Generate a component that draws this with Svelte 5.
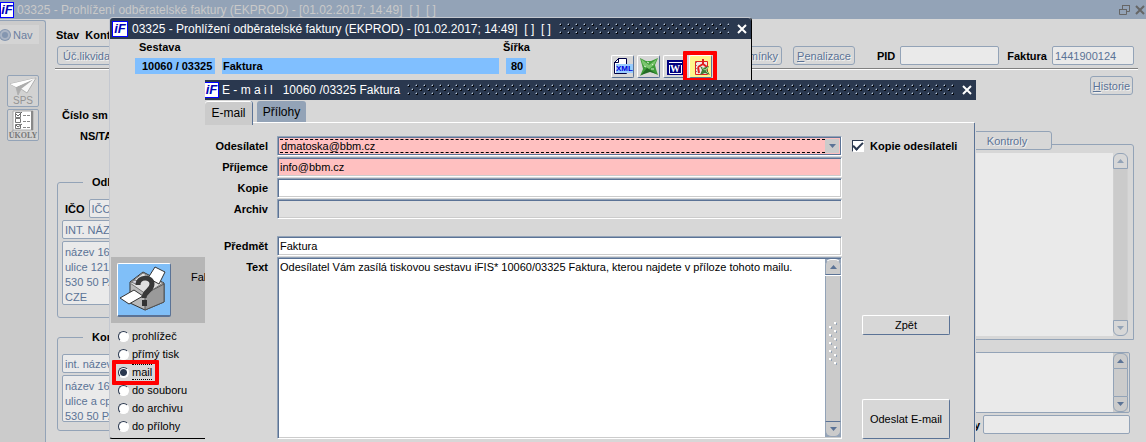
<script>
  let target = $state('mail');
  let copySender = $state(true);
  const targets = ['prohlížeč', 'přímý tisk', 'mail', 'do souboru', 'do archivu', 'do přílohy'];
  const title = '03325 - Prohlížení odběratelské faktury (EKPROD) - [01.02.2017; 14:49]  [ ]  [ ]';
</script>

{#snippet logo()}
  <span class="logo">iF</span>
{/snippet}

{#snippet dots(id)}
  <svg class="dots" aria-hidden="true">
    <defs>
      <pattern {id} width="8" height="8" patternUnits="userSpaceOnUse">
        <path d="M1 1h1v1h-1zM5 5h1v1h-1z" fill="#b4c2d4" />
        <path d="M0 1h1v1h-1zM1 0h1v1h-1zM4 5h1v1h-1zM5 4h1v1h-1z" fill="#64748a" />
        <path d="M2 1h1v2h-2v-1h1zM6 5h1v2h-2v-1h1z" fill="#05080e" />
      </pattern>
    </defs>
    <rect width="100%" height="100%" fill="url(#{id})" />
  </svg>
{/snippet}

{#snippet cross()}
  <svg width="10" height="10" viewBox="0 0 10 10" aria-hidden="true">
    <path d="M1 1L9 9M9 1L1 9" stroke="currentColor" stroke-width="2" />
  </svg>
{/snippet}

{#snippet scrollbar(kind)}
  <div class="scroll {kind}" aria-hidden="true">
    <span class="up"><svg width="7" height="4" viewBox="0 0 7 4"><path d="M0 4L3.500 0L7 4z" fill="currentColor" /></svg></span>
    <span class="track">
      {#if kind === 'active'}
        <svg width="10" height="44" viewBox="0 0 10 44">
          {#each [0, 1, 2, 3, 4, 5] as i}
            <rect x="6" y={i * 8} width="2" height="2" fill="#fff" />
            <rect x="8" y={i * 8 + 1} width="1" height="2" fill="#93a3b7" />
            {#if i < 5}
              <rect x="1" y={i * 8 + 4} width="2" height="2" fill="#fff" />
              <rect x="3" y={i * 8 + 5} width="1" height="2" fill="#93a3b7" />
            {/if}
          {/each}
        </svg>
      {/if}
    </span>
    <span class="down"><svg width="7" height="4" viewBox="0 0 7 4"><path d="M0 0L3.500 4L7 0z" fill="currentColor" /></svg></span>
  </div>
{/snippet}

<div class="desktop">
  <main class="app">
    <header class="bar inactive">
      {@render logo()}
      <h1>{title}</h1>
      <div class="controls">
        <button aria-label="Obnovit">
          <svg width="11" height="11" viewBox="0 0 11 11"><path d="M3.500 5V1.500H10.500V7.500H7M.5 5.500H7.500V10.500H.5z" fill="none" stroke="currentColor" /><path d="M3 1h8v1H3zM0 5h8v1H0z" fill="currentColor" /></svg>
        </button>
        <button aria-label="Zavřít">{@render cross()}</button>
      </div>
    </header>

    <div class="workspace">
      <nav class="side">
        <label class="nav"><input type="radio" name="nav" disabled />Nav</label>
        <button class="tool" aria-label="SPS">
          <svg width="28" height="20" viewBox="0 0 28 20"><path d="M1 8L27 2L18 17L12 13L9 19L7 11z" fill="#f8f8f8" stroke="#b0b0b0" /><path d="M7 11L25 3L12 13L9 19z" fill="#adadad" /><path d="M1 8L27 2L7 11z" fill="#fff" /></svg>
          <span>SPS</span>
        </button>
        <button class="tool tasks" aria-label="Úkoly">
          <svg width="22" height="21" viewBox="0 0 22 21">
            <path d="M1 1h20v19H1z" fill="#fff" stroke="#aaa" /><path d="M20 1v19" stroke="#888" stroke-width="2" />
            <path d="M3.500 2.500h5v5h-5zM3.500 8.500h5v4h-5zM3.500 14.500h5v4h-5z" fill="none" stroke="#777" />
            <path d="M4 4l2 2l4-4M4 15l2 2l4-3" fill="none" stroke="#666" />
            <path d="M11 5.500h7M11 11.500h7M11 17.500h7" stroke="#888" stroke-dasharray="3 1" />
          </svg>
          <span>ÚKOLY</span>
        </button>
      </nav>

      <div class="doc">
        <div class="menu"><span>Stav</span><span>Kont</span></div>
        <div class="toolbar">
          <button class="flat first">Úč.likvida</button>
          <button class="flat push">omínky</button>
          <button class="flat"><u>P</u>enalizace</button>
          <label class="pid" for="pid">PID</label><input id="pid" class="dim pidbox" />
          <label for="fakt">Faktura</label><input id="fakt" class="dim faktbox" value="1441900124" />
        </div>
        <div class="panels">
          <div class="left">
            <strong class="num">Číslo sm</strong>
            <strong class="ns">NS/TA</strong>
            <fieldset class="odb">
              <legend>Odb</legend>
              <div class="ico"><label for="ico">IČO</label><input id="ico" class="dim" value="IČO" /></div>
              <input class="dim" aria-label="Interní název" value="INT. NÁZE" />
              <textarea class="dim tall" aria-label="Adresa">{'název 16\nulice 1217\n530 50 PA\nCZE'}</textarea>
            </fieldset>
            <fieldset class="kon">
              <legend>Kon</legend>
              <input class="dim" aria-label="Název" value="int. název" />
              <textarea class="dim short" aria-label="Adresa kontaktu">{'název 16\nulice a cp\n530 50 PA'}</textarea>
            </fieldset>
          </div>
          <div class="right">
            <button class="flat history"><u>H</u>istorie</button>
            <div class="tabline"><button class="flat tab">Kontroly</button></div>
            <div class="checks"><div class="void"></div>{@render scrollbar('off')}</div>
            <div class="notes"><div class="void"></div>{@render scrollbar('semi')}</div>
            <div class="last"><label for="last">y</label><input id="last" class="dim" /></div>
          </div>
        </div>
      </div>
    </div>
  </main>

  <section class="report">
    <header class="bar">
      {@render logo()}
      <h2>{title}</h2>
      {@render dots('d1')}
      <button class="x" aria-label="Zavřít sestavu">{@render cross()}</button>
    </header>
    <div class="rep-head">
      <div class="cell code"><strong>Sestava</strong><span class="blue">10060 / 03325</span></div>
      <div class="cell name"><span class="blue">Faktura</span></div>
      <div class="cell"><strong class="wide">Šířka</strong><span class="blue eighty">80</span></div>
      <div class="exports">
        <button aria-label="XML">
          <svg width="21" height="21" viewBox="0 0 21 21"><path d="M2.500 17.500V6.500L6.500 2.500H14.500V17.500z" fill="#fff" stroke="#000044" /><path d="M2 6.500h4.500V2" fill="none" stroke="#000044" /><rect x="4" y="8" width="17" height="9" fill="#99ccff" /><text x="4" y="15" font-size="8" fill="#0000dd" font-family="Liberation Sans, sans-serif">XML</text></svg>
        </button>
        <button aria-label="Excel">
          <svg width="20" height="20" viewBox="0 0 20 20"><path d="M1 1L7 4L12 4L19 1L16 8L17 12L19 18L12 15L8 15L1 19L4 12L3 8z" fill="#3f9d3a" /><path d="M2 2L10 8L18 2L15 8L10 12L4 8z" fill="#7cc56f" /><path d="M2 18L8 11L18 17L11 15z" fill="#236c25" /><path d="M5 9l2 1M12 12l3 0M8 5l2 1M13 7l1 1" stroke="#d5efcf" /></svg>
        </button>
        <button aria-label="Word">
          <svg width="20" height="20" viewBox="0 0 20 20"><rect x="2" y="3" width="17" height="15" fill="#000080" /><path d="M4 5.500h13M4.500 8v8.500h12V8" fill="none" stroke="#fff" /><rect x="6" y="7" width="10" height="8" fill="#000080" /><text x="5" y="15" font-size="10" font-weight="bold" fill="#fff" font-family="Liberation Serif, serif">W</text></svg>
        </button>
        <button class="hot" aria-label="PDF">
          <svg width="20" height="20" viewBox="0 0 20 20">
            <path d="M4.500 4.500H16.500V17.500H4.500z" fill="#f4e6e6" stroke="#d22" />
            <path d="M5 5.500h1M5 8.500h1M5 11.500h1M5 14.500h1" stroke="#888" />
            <path d="M12 2v5M12 7l-5 3M12 7l4 3M7 10l1 6" fill="none" stroke="#e02020" stroke-width="2" />
            <path d="M9 9l3 2l6-2l-2 4l3 5l-5-2l-5 2l2-5z" fill="#3f7f38" /><path d="M11 11l3 2l3-3l-2 4l2 2" fill="none" stroke="#9ccf8c" />
          </svg>
        </button>
        <span class="mark mark-pdf"></span>
      </div>
    </div>
    <div class="printer">
      <button aria-label="Tisk">
        <svg width="52" height="52" viewBox="0 0 52 52">
          <rect width="52" height="52" fill="#80bff8" />
          <path d="M12 18L25 8L46 19L46 38L27 46L12 39z" fill="#b9b9b9" stroke="#333" />
          <path d="M27 30L46 20V38L27 46z" fill="#9a9a9a" stroke="#555" />
          <path d="M12 19L25 9L45 19L28 30z" fill="#e0e0e0" stroke="#777" />
          <path d="M30 14L37 3L47 8L41 20z" fill="#fff" stroke="#333" />
          <path d="M2 34L16 26L25 32L11 40z" fill="#fff" stroke="#333" />
          <path d="M13 18l4-2l5 2l-4 2z" fill="#d5d5e0" stroke="#777" />
          <path d="M20 21C20 12 34 12 34 20C34 27 26 27 26 34" fill="none" stroke="#383838" stroke-width="5" />
          <rect x="24" y="36" width="5" height="6" fill="#333" />
        </svg>
      </button>
      <span>Fakt</span>
    </div>
    <div class="targets" role="radiogroup" aria-label="Výstup">
      {#each targets as t}
        <label class:chosen={t === 'mail'}>
          <input type="radio" name="target" value={t} bind:group={target} /><span>{t}</span>
          {#if t === 'mail'}<i class="mark mark-mail"></i>{/if}
        </label>
      {/each}
    </div>
  </section>

  <section class="mail">
    <header class="bar">
      {@render logo()}
      <h2>{'E - m a i l   10060 /03325 Faktura'}</h2>
      {@render dots('d2')}
      <button class="x" aria-label="Zavřít e-mail">{@render cross()}</button>
    </header>
    <div class="tabs"><button class="on">E-mail</button><button>Přílohy</button></div>
    <div class="panel">
      <div class="form">
        <label for="from">Odesílatel</label>
        <div class="field pink combo">
          <select id="from"><option>dmatoska@bbm.cz</option></select>
          <span class="arrow"><svg width="7" height="4" viewBox="0 0 7 4"><path d="M0 0L3.500 4L7 0z" fill="#5b7396" /></svg></span>
        </div>
        <label for="to">Příjemce</label><input id="to" class="field pink" value="info@bbm.cz" />
        <label for="cc">Kopie</label><input id="cc" class="field" />
        <label for="arch">Archiv</label><input id="arch" class="field gray" readonly />
        <label class="gap" for="subj">Předmět</label><input id="subj" class="field gap" value="Faktura" />
        <label for="body">Text</label>
        <div class="field text">
          <textarea id="body">Odesílatel Vám zasílá tiskovou sestavu iFIS* 10060/03325 Faktura, kterou najdete v příloze tohoto mailu.</textarea>
          {@render scrollbar('active')}
        </div>
      </div>
      <div class="actions">
        <label class="copy"><input type="checkbox" bind:checked={copySender} />Kopie odesílateli</label>
        <button class="back">Zpět</button>
        <button class="send">Odeslat E-mail</button>
      </div>
    </div>
  </section>
</div>

<style>
  :global(body) { background: #d7d7d7; }
  .desktop, .desktop * { box-sizing: border-box; }
  .desktop {
    position: relative; height: 100vh; overflow: hidden; background: #d7d7d7; color: #000;
    font: 11px/14px "Liberation Sans", Arial, sans-serif;
  }
  button, input, textarea, select { font: inherit; color: inherit; margin: 0; padding: 0; border: 0; border-radius: 0; background: none; outline: none; }
  h1, h2 { margin: 0; font-size: 12px; font-weight: normal; white-space: pre; line-height: 16px; }
  svg { display: block; flex: none; }

  .bar { display: flex; align-items: center; gap: 4px; color: #fff; background: #2a384f; }
  .bar.inactive { height: 19px; background: #93a3b7; color: #c9c9c9; gap: 3px; }
  .logo {
    flex: none; width: 16px; height: 16px; border: 1px solid #00f; background: #fff; color: #0000b8;
    font-size: 13px; line-height: 14px; font-weight: bold; font-style: italic; text-align: center;
  }
  .inactive .logo { width: 14px; }
  .dots { flex: 1; width: 0; height: 12px; margin-left: 4px; }
  .controls { margin-left: auto; display: flex; gap: 5px; color: #666; padding-right: 1px; }
  .x { padding: 0 0 0 4px; color: #fff; }

  .app { height: 100%; display: flex; flex-direction: column; }
  .workspace { flex: 1; display: flex; min-height: 0; }
  .side { width: 46px; flex: none; margin-top: 1px; border-top: 1px solid #93a3b7; border-right: 1px solid #93a3b7; border-top-right-radius: 3px; background: #cbcbcb; padding: 4px 7px; display: flex; flex-direction: column; gap: 2px; }
  .nav { display: flex; align-items: center; gap: 3px; margin: 0 0 29px -7px; width: 39px; height: 19px; background: #d4d4d4; color: #6b7fa0; }
  .nav input { appearance: none; width: 10px; height: 10px; border: 2px solid #aab4c4; border-radius: 50%; background: #8496b0; box-shadow: 0 0 0 1px #8496b0; }
  .tool { width: 32px; height: 32px; flex: none; border: 1px solid #93a3b7; border-radius: 2px; display: flex; flex-direction: column; align-items: center; overflow: hidden; color: #949494; background: #d2d2d2; font-size: 10px; line-height: 10px; }
  .tasks span { font: bold 8px/9px "Liberation Serif", serif; color: #777; }

  .doc { flex: 1; min-width: 0; padding: 9px 8px 0 9px; display: flex; flex-direction: column; }
  .menu { display: flex; gap: 6px; font-weight: bold; padding-left: 1px; }
  .toolbar { display: flex; align-items: center; padding: 4px 4px 3px 2px; border-bottom: 1px solid #808080; box-shadow: 0 1px #fff; font-weight: bold; }
  .flat { height: 19px; border: 1px solid #93a3b7; border-radius: 3px; color: #5b7396; font-weight: normal; padding: 0 3px; text-shadow: 1px 1px #f2f2f2; white-space: nowrap; }
  .first { width: 80px; text-align: left; padding-left: 5px; }
  .push { margin: 0 11px 0 auto; }
  .toolbar .pid { margin-left: 22px; }
  .toolbar label { margin-right: 5px; }
  .dim { height: 19px; min-width: 0; border: 1px solid #93a3b7; border-radius: 2px; background: #eaeaea; color: #5b7396; font-weight: normal; padding: 0 2px; }
  .pidbox { width: 99px; margin-right: 8px; }
  .faktbox { width: 82px; }
  .panels { flex: 1; display: flex; min-height: 0; }
  .left { width: 300px; flex: none; padding-left: 2px; display: flex; flex-direction: column; }
  .num { margin: 39px 0 7px 5px; }
  .ns { margin-left: 23px; }
  fieldset { margin: 0; padding: 10px 4px 0; min-width: 0; border: 1px solid #93a3b7; border-radius: 3px; display: flex; flex-direction: column; gap: 2px; }
  legend { font-weight: bold; margin-left: 21px; padding: 0 9px; line-height: 14px; }
  .odb { margin-top: 32px; height: 143px; }
  .kon { margin-top: 12px; height: 101px; }
  .odb > .dim, .kon > .dim { flex: none; }
  .ico { display: flex; align-items: center; gap: 4px; font-weight: bold; margin-left: 3px; }
  textarea { resize: none; overflow: hidden; display: block; }
  textarea.dim { padding: 3px 2px; line-height: 15px; }
  .tall { height: 64px; }
  .short { height: 47px; }
  .right { flex: 1; min-width: 0; display: flex; flex-direction: column; padding-right: 4px; }
  .history { align-self: flex-end; margin: 7px 1px 0 0; width: 43px; padding: 0; }
  .tabline { margin-top: 36px; display: flex; justify-content: flex-end; padding-right: 82px; height: 13px; position: relative; }
  .tab { width: 150px; padding: 0 0 0 60px; text-align: center; background: #d7d7d7; }
  .checks { height: 196px; border: 1px solid #93a3b7; border-top-right-radius: 3px; padding: 8px 5px 3px 0; display: flex; }
  .notes { margin: 12px 4px 0 0; height: 61px; border: 1px solid #93a3b7; border-radius: 2px; padding-right: 1px; display: flex; }
  .void { flex: 1; background: #eaeaea; }
  .last { display: flex; justify-content: flex-end; align-items: center; gap: 3px; margin: 2px 4px 0 0; font-weight: bold; }
  .last input { width: 147px; }

  .scroll { width: 15px; flex: none; display: flex; flex-direction: column; background: #cbcbcb; color: #5b7396; }
  .scroll span { display: flex; align-items: center; justify-content: center; border: 1px solid #93a3b7; }
  .up, .down { height: 16px; flex: none; }
  .scroll .up { border-radius: 6px 6px 0 0; }
  .scroll .down { border-radius: 0 0 6px 6px; }
  .scroll .track { flex: 1; border-width: 0 1px; min-height: 0; }
  .off .track { border-color: #d0d0d0; }
  .off { color: #93a3b7; background: #d7d7d7; }
  .off .track { background: #cbcbcb; }
  .active { width: 16px; background: #93a3b7; }
  .active span { background: #cbcbcb; }
  .active .up { border-bottom-color: #5b7396; box-shadow: 0 1px #fff; border-top-color: #fff; }
  .active .down { border-top-color: #5b7396; }
  .active .track { margin-top: 1px; padding-bottom: 10px; }

  .report { position: absolute; z-index: 1; left: 109px; top: 17px; right: 394px; height: 422px; background: #d7d7d7; border: 1px solid #c4c8d0; border-right-color: #000; border-bottom-color: #000; border-radius: 4px 4px 0 3px; }
  .report .bar { height: 21px; padding: 0 4px 0 2px; border-radius: 3px 3px 0 0; }
  .rep-head { display: flex; padding: 1px 39px 0 25px; height: 218px; align-items: flex-start; font-weight: bold; }
  .cell { display: flex; flex-direction: column; justify-content: flex-end; height: 34px; margin-right: 7px; }
  .cell strong { margin: 0 0 4px 4px; }
  .blue { background: #80bfff; height: 16px; line-height: 16px; padding: 0 1px; }
  .code { width: 80px; flex: none; }
  .code .blue { padding-left: 7px; white-space: nowrap; }
  .name { flex: 1; }
  .cell .wide { margin-left: -3px; }
  .eighty { width: 20px; padding-left: 5px; }
  .cell:has(.eighty) { width: 20px; }
  .exports { position: relative; display: flex; gap: 3px; margin: 15px 0 0 78px; }
  .exports button { width: 23px; height: 23px; border: 1px solid #fff; border-right-color: #5b7396; border-bottom-color: #5b7396; border-radius: 2px; display: grid; place-items: center; }
  .exports .hot { background: #fff58c; }
  .mark { position: absolute; border: 4px solid #f00; border-radius: 1px; pointer-events: none; }
  .mark-pdf { right: -5px; top: -4px; width: 34px; height: 31px; }
  .printer { margin: 0 1px; height: 66px; background: #b6b6b6; padding: 6px; display: flex; gap: 20px; }
  .printer button { width: 54px; height: 54px; border: 1px solid #fff; border-right-color: #5b7396; border-bottom: 2px solid #5b7396; border-radius: 2px; overflow: hidden; }
  .printer span { padding-top: 7px; }
  .targets { padding: 4px 8px; display: flex; flex-direction: column; align-items: flex-start; }
  .targets label { position: relative; display: flex; align-items: center; gap: 3px; height: 18px; }
  .targets input { appearance: none; width: 11px; height: 11px; border-radius: 50%; background: #fff; border: 1px solid #fff; border-top-color: #2a384f; border-left-color: #2a384f; }
  .targets input:checked { background: radial-gradient(#2a384f 0 3px, #fff 4px); }
  .chosen span { border-top: 1px dotted #000; border-bottom: 1px dotted #000; }
  .mark-mail { left: -6px; top: -3px; width: 47px; height: 25px; }

  .mail { position: absolute; z-index: 2; left: 205px; right: 170px; top: 80px; bottom: 0; display: flex; flex-direction: column; background: #d7d7d7; }
  .mail .bar { height: 20px; padding: 0 4px 0 0; gap: 3px; }
  .mail .logo { width: 14px; border-left: 0; }
  .tabs { display: flex; gap: 4px; margin-right: 2px; font-size: 12px; height: 23px; padding-top: 1px; border-bottom: 1px solid #fff; }
  .tabs button { width: 49px; height: 21px; background: #93a3b7; border-radius: 3px 3px 0 0; }
  .tabs .on { width: 48px; height: 24px; background: #cbcbcb; border-right: 1px solid #5b7396; box-shadow: inset 0 1px #fff; }
  .panel { flex: 1; min-height: 0; display: flex; margin-right: 1px; border-right: 1px solid #5b7396; padding: 13px 0 3px; }
  .form { flex: 1; min-width: 0; display: grid; grid-template-columns: 63px 1fr; column-gap: 9px; row-gap: 1px; grid-template-rows: 20px 20px 20px 20px 36px 1fr; }
  .form label { font-weight: bold; text-align: right; line-height: 20px; }
  .form .gap { margin-top: 16px; }
  .field { width: 100%; min-width: 0; height: 20px; background: #fff; padding: 0 2px; border: 1px solid #93a3b7; border-right-color: #fff; border-bottom-color: #fff; border-radius: 1px; box-shadow: inset 1px 1px #5b7396, inset -1px -1px #ccc; }
  .pink { background: #ffc0c0; }
  .gray { background: #e0e0e0; }
  .combo { display: flex; padding: 2px; box-shadow: inset 1px 1px #5b7396, inset -1px -1px #5b7396; }
  .combo select { flex: 1; min-width: 0; appearance: none; height: 14px; line-height: 12px; border-top: 1px dashed #000; border-bottom: 1px dashed #000; padding: 0 1px; }
  .arrow { width: 14px; background: #cbcbcb; display: grid; place-items: center; }
  .text { height: auto; display: flex; padding: 1px 0 1px 2px; min-height: 0; }
  .text textarea { flex: 1; min-width: 0; padding-top: 1px; }
  .actions { width: 132px; flex: none; padding: 0 24px 0 20px; display: flex; flex-direction: column; }
  .copy { display: flex; align-items: center; gap: 6px; height: 20px; margin-left: -10px; font-weight: bold; white-space: nowrap; }
  .copy input { appearance: none; flex: none; width: 12px; height: 12px; border: 1px solid #2a384f; border-right-color: #fff; border-bottom-color: #fff; background: #fff; display: grid; place-items: center; }
  .copy input:checked::before { content: ""; width: 8px; height: 4px; border: solid #2a384f; border-width: 0 0 2px 2px; transform: translateY(-1px) rotate(-45deg); }
  .back, .send { border: 1px solid #fff; border-right-color: #5b7396; border-bottom-color: #5b7396; border-radius: 2px; }
  .back { height: 20px; margin-top: 159px; }
  .send { height: 40px; margin-top: auto; }
</style>
